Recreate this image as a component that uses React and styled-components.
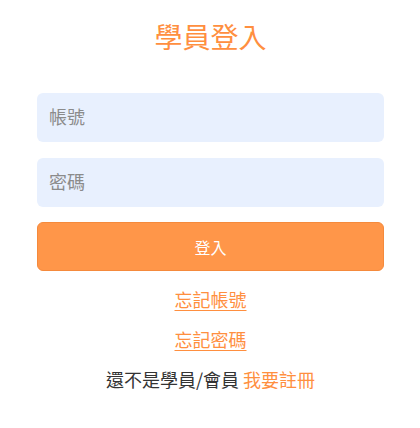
import styled, { createGlobalStyle } from 'styled-components'

const GlobalStyle = createGlobalStyle`
  html, body {
    margin: 0;
    padding: 0;
    background: #fff;
  }
  body {
    font-family: "Noto Sans CJK TC", "Noto Sans", sans-serif;
  }
`

const Page = styled.div`
  box-sizing: border-box;
  width: 420px;
  padding: 16px 36px 0 37px;
  display: flex;
  flex-direction: column;
  align-items: stretch;
`

const Title = styled.h1`
  margin: 0;
  font-size: 28px;
  line-height: 40px;
  font-weight: 400;
  color: #ff8f3f;
  text-align: center;
`

const Form = styled.form`
  margin-top: 37px;
  display: flex;
  flex-direction: column;
`

const Field = styled.input`
  box-sizing: border-box;
  height: 49px;
  margin: 0 0 16px;
  padding: 0 12px 3px;
  border: none;
  border-radius: 6px;
  background: #e8f0fe;
  font-family: inherit;
  font-size: 18px;
  color: #333;
  outline: none;
  &::placeholder {
    color: #8b8b8b;
  }
`

const Submit = styled.button`
  box-sizing: border-box;
  height: 49px;
  margin-top: -1px;
  border: 1px solid #f58a3c;
  border-radius: 6px;
  background: #ff9649;
  color: #fff;
  font-family: inherit;
  font-size: 16px;
  cursor: pointer;
`

const Links = styled.div`
  margin-top: 8px;
  display: flex;
  flex-direction: column;
  align-items: center;
`

const Row = styled.div`
  line-height: 40px;
  font-size: 18px;
  color: #333;
`

const Link = styled.a`
  color: #ff8f3f;
  text-decoration: ${p => (p.$plain ? 'none' : 'underline')};
  text-underline-offset: 3px;
  cursor: pointer;
`

export default function App() {
  return (
    <>
      <GlobalStyle />
      <Page>
        <Title>學員登入</Title>
        <Form onSubmit={e => e.preventDefault()}>
          <Field type='text' placeholder='帳號' />
          <Field type='password' placeholder='密碼' />
          <Submit type='submit'>登入</Submit>
        </Form>
        <Links>
          <Row><Link>忘記帳號</Link></Row>
          <Row><Link>忘記密碼</Link></Row>
          <Row>還不是學員/會員 <Link $plain>我要註冊</Link></Row>
        </Links>
      </Page>
    </>
  )
}
